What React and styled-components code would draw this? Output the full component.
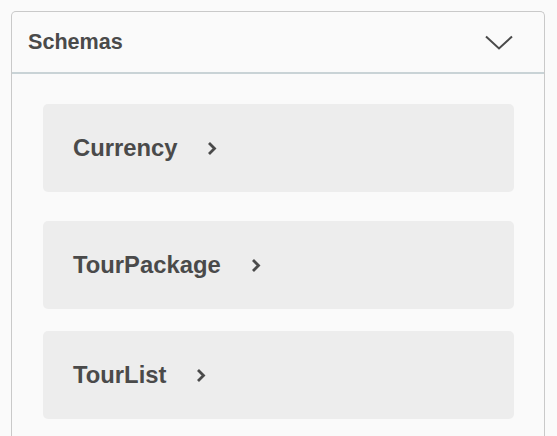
import React from "react";
import styled, { createGlobalStyle } from "styled-components";

const GlobalStyle = createGlobalStyle`
  body {
    margin: 0;
    background: #fafafa;
    font-family: "Liberation Sans", Arial, sans-serif;
  }
`;

const Page = styled.div`
  padding: 11px 12px 0 11px;
  height: 436px;
  box-sizing: border-box;
  overflow: hidden;
`;

const Panel = styled.section`
  border: 1px solid #c9c9c9;
  border-bottom: none;
  border-radius: 5px 5px 0 0;
  background: #fafafa;
  height: 440px;
`;

const Header = styled.div`
  display: flex;
  align-items: center;
  justify-content: space-between;
  height: 60px;
  padding: 0 31px 0 16px;
  border-bottom: 2px solid #c9d3d6;
`;

const Title = styled.h2`
  margin: 0;
  font-size: 21.6px;
  font-weight: bold;
  color: #4a4a4a;
`;

const List = styled.div`
  display: flex;
  flex-direction: column;
  padding: 30px 30px 0 31px;
`;

const Card = styled.div`
  display: flex;
  align-items: center;
  gap: 30px;
  height: 88px;
  padding-left: 30px;
  margin-bottom: ${(p) => p.$space}px;
  background: #ededed;
  border-radius: 5px;
  font-size: 23.8px;
  font-weight: bold;
  color: #4a4a4a;
  cursor: pointer;
`;

const ChevronDown = () => (
  <svg width="28" height="15" viewBox="0 0 28 15" fill="none">
    <path d="M1 1.5 L14 13.5 L27 1.5" stroke="#4a4a4a" strokeWidth="2" />
  </svg>
);

const ChevronRight = () => (
  <svg width="10" height="15" viewBox="0 0 10 15" fill="none">
    <path d="M2 2 L7.5 7.5 L2 13" stroke="#4a4a4a" strokeWidth="2.8" />
  </svg>
);

const schemas = [
  { name: "Currency", space: 29 },
  { name: "TourPackage", space: 22 },
  { name: "TourList", space: 0 },
];

export default function App() {
  return (
    <Page>
      <GlobalStyle />
      <Panel>
        <Header>
          <Title>Schemas</Title>
          <ChevronDown />
        </Header>
        <List>
          {schemas.map((s) => (
            <Card key={s.name} $space={s.space}>
              {s.name}
              <ChevronRight />
            </Card>
          ))}
        </List>
      </Panel>
    </Page>
  );
}
